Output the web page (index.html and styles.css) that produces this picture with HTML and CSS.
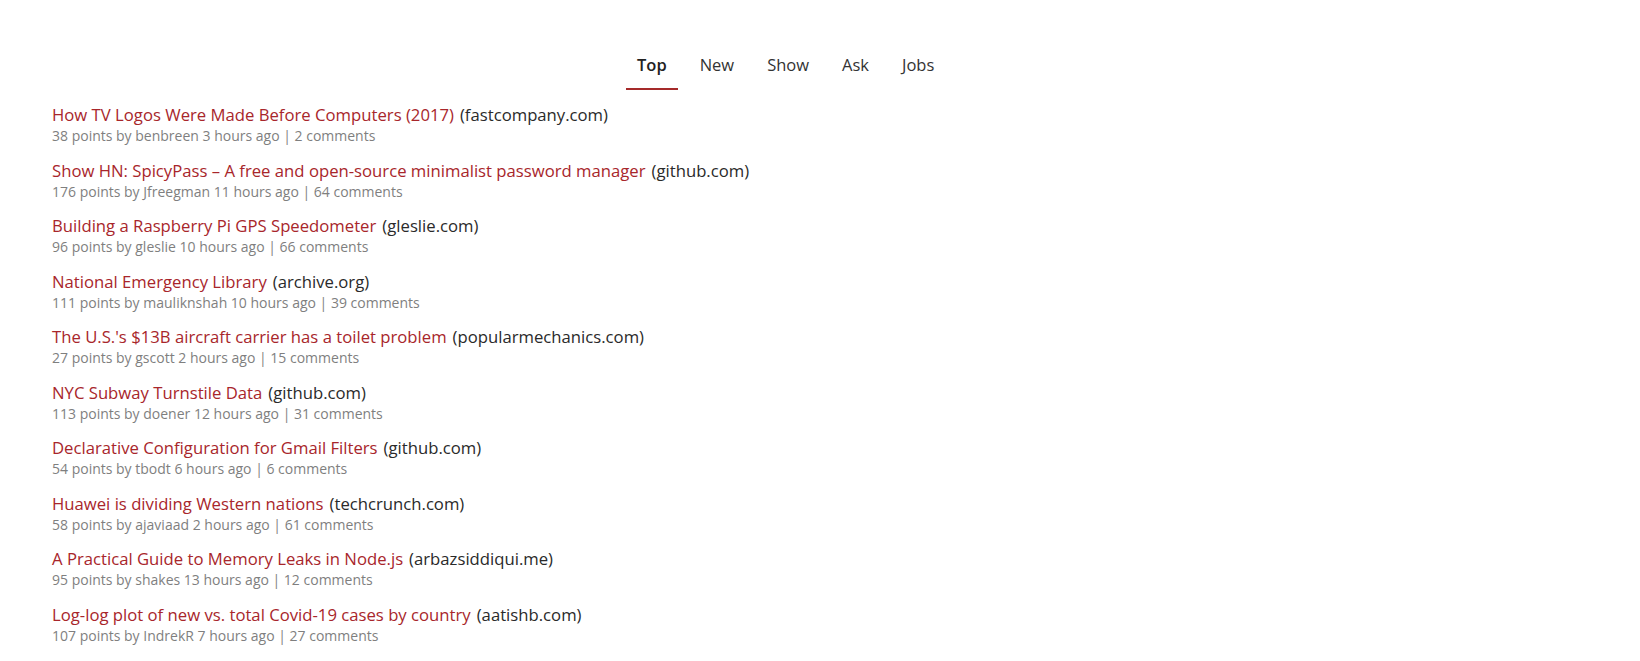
FILE: index.html
```html
<!DOCTYPE html>
<html>
<head>
<meta charset="utf-8">
<link rel="stylesheet" href="styles.css">
</head>
<body>
<nav class="tabs">
  <a class="tab active">Top</a>
  <a class="tab">New</a>
  <a class="tab">Show</a>
  <a class="tab">Ask</a>
  <a class="tab">Jobs</a>
</nav>
<ul class="list">
  <li class="item"><div class="line"><a class="title">How TV Logos Were Made Before Computers (2017)</a><span class="domain">(fastcompany.com)</span></div><div class="meta">38 points by benbreen 3 hours ago | 2 comments</div></li>
  <li class="item"><div class="line"><a class="title">Show HN: SpicyPass – A free and open-source minimalist password manager</a><span class="domain">(github.com)</span></div><div class="meta">176 points by Jfreegman 11 hours ago | 64 comments</div></li>
  <li class="item"><div class="line"><a class="title">Building a Raspberry Pi GPS Speedometer</a><span class="domain">(gleslie.com)</span></div><div class="meta">96 points by gleslie 10 hours ago | 66 comments</div></li>
  <li class="item"><div class="line"><a class="title">National Emergency Library</a><span class="domain">(archive.org)</span></div><div class="meta">111 points by mauliknshah 10 hours ago | 39 comments</div></li>
  <li class="item"><div class="line"><a class="title">The U.S.'s $13B aircraft carrier has a toilet problem</a><span class="domain">(popularmechanics.com)</span></div><div class="meta">27 points by gscott 2 hours ago | 15 comments</div></li>
  <li class="item"><div class="line"><a class="title">NYC Subway Turnstile Data</a><span class="domain">(github.com)</span></div><div class="meta">113 points by doener 12 hours ago | 31 comments</div></li>
  <li class="item"><div class="line"><a class="title">Declarative Configuration for Gmail Filters</a><span class="domain">(github.com)</span></div><div class="meta">54 points by tbodt 6 hours ago | 6 comments</div></li>
  <li class="item"><div class="line"><a class="title">Huawei is dividing Western nations</a><span class="domain">(techcrunch.com)</span></div><div class="meta">58 points by ajaviaad 2 hours ago | 61 comments</div></li>
  <li class="item"><div class="line"><a class="title">A Practical Guide to Memory Leaks in Node.js</a><span class="domain">(arbazsiddiqui.me)</span></div><div class="meta">95 points by shakes 13 hours ago | 12 comments</div></li>
  <li class="item"><div class="line"><a class="title">Log-log plot of new vs. total Covid-19 cases by country</a><span class="domain">(aatishb.com)</span></div><div class="meta">107 points by IndrekR 7 hours ago | 27 comments</div></li>
</ul>
</body>
</html>
```
FILE: styles.css
```css
* { box-sizing: border-box; }
html, body { margin: 0; padding: 0; background: #fff; }
body {
  font-family: "Open Sans", "Noto Sans", sans-serif;
  color: #222;
  overflow: hidden;
}
.tabs {
  display: flex;
  gap: 11px;
  padding: 50px 0 0 626px;
}
.tab {
  font-size: 16.5px;
  line-height: 22px;
  padding: 4px 11px 12px;
  color: #333;
  border-bottom: 2px solid transparent;
}
.tab.active {
  font-weight: 600;
  color: #222;
  border-bottom-color: #a52a2a;
}
.list {
  list-style: none;
  margin: 0;
  padding: 13px 0 0 52px;
}
.item {
  height: 55.5px;
}
.line {
  font-size: 16.7px;
  line-height: 23px;
  display: flex;
  gap: 6px;
}
.title { color: #a8262b; }
.domain { color: #2a2a2a; }
.meta {
  font-size: 14px;
  line-height: 19px;
  color: #7f7f7f;
}
```
